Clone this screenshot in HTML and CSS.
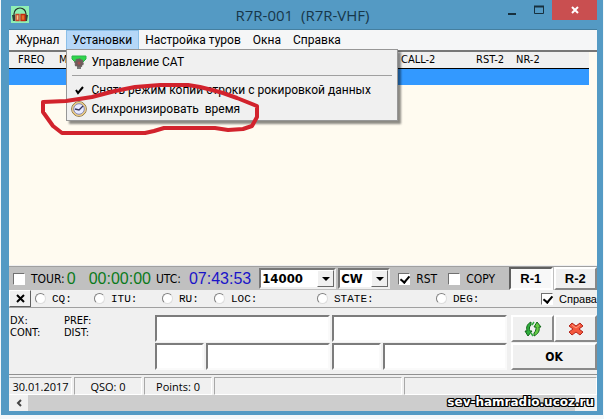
FILE: index.html
```html
<!DOCTYPE html>
<html lang="ru">
<head>
  <meta charset="UTF-8">
  <meta name="viewport" content="width=device-width, initial-scale=1.0">
  <title>R7R-001 (R7R-VHF)</title>
  <link rel="stylesheet" href="styles.css">
</head>
<body>
  <div class="window">
    <header class="titlebar">
      <svg class="app-icon" width="18" height="17" viewBox="0 0 18 17">
        <rect width="18" height="17" fill="#8ff0b4"/>
        <path d="M3 10V8a6 6 0 0 1 12 0v2" fill="none" stroke="#26332a" stroke-width="1.2"/>
        <path d="M1 9h3v6H2zM14 9h3l-1 6h-2z" fill="#33423a"/>
        <path d="M5 8.5h3v6H5z" fill="#f6c88c" stroke="#c8452a" stroke-width="1.3"/>
        <path d="M10 8.5h4v6h-4z" fill="#e0742c" stroke="#c52a12" stroke-width="1.3"/>
      </svg>
      <h1 class="title">R7R-001&nbsp; (R7R-VHF)</h1>
      <div class="win-buttons">
        <button class="win-btn" aria-label="Свернуть"><svg width="10" height="10"><path d="M1 9h8" stroke="#17303e" stroke-width="2"/></svg></button>
        <button class="win-btn" aria-label="Развернуть"><svg width="10" height="10"><path d="M.5 1.5h9v7h-9z" fill="none" stroke="#17303e"/><path d="M0 1.5h10" stroke="#17303e" stroke-width="2"/></svg></button>
        <button class="win-btn win-close" aria-label="Закрыть"><svg width="8" height="8"><path d="M1 1l6 6M7 1l-6 6" stroke="#fff" stroke-width="2"/></svg></button>
      </div>
    </header>

    <main class="client">
      <nav class="menubar">
        <button class="menu-item">Журнал</button>
        <div class="menu-holder">
          <button class="menu-item active">Установки</button>
          <!-- Раскрытое меню -->
          <div class="dropdown">
            <button class="drop-item">
              <svg width="16" height="16" viewBox="0 0 16 16">
                <path d="M1 2h14v3l-3 3H4L1 5z" fill="#2fd64c" stroke="#2bb548"/>
                <circle cx="8" cy="9" r="4" fill="#6e5c5c"/>
                <circle cx="8" cy="9" r="4" fill="none" stroke="#6e6262" stroke-width="1.5" stroke-dasharray="2 1"/>
                <circle cx="8" cy="9" r="1.5" fill="#a05050"/>
                <path d="M6 13h4v2H6z" fill="#777"/>
              </svg>
              Управление САТ
            </button>
            <hr class="drop-line">
            <button class="drop-item">
              <svg width="16" height="16" viewBox="0 0 16 16"><path d="M5 8l2 3 5-6" fill="none" stroke="#000" stroke-width="2"/></svg>
              Снять режим копии строки с рокировкой данных
            </button>
            <button class="drop-item">
              <svg width="16" height="16" viewBox="0 0 16 16">
                <circle cx="8" cy="8" r="7.3" fill="#e8eaff" stroke="#7d6434"/>
                <circle cx="8" cy="8" r="6.3" fill="none" stroke="#f0cd78" stroke-width="1.2"/>
                <circle cx="8" cy="8" r="5.3" fill="none" stroke="#6a6a9a" stroke-width=".8"/>
                <path d="M4 8l4 1 4-4" fill="none" stroke="#34345c" stroke-width="1.3"/>
              </svg>
              Синхронизировать&nbsp; время
            </button>
          </div>
        </div>
        <button class="menu-item">Настройка туров</button>
        <button class="menu-item">Окна</button>
        <button class="menu-item">Справка</button>
      </nav>

      <section class="log">
        <table class="log-table">
          <thead>
            <tr><th class="c-freq">FREQ</th><th class="c-mode">MODE</th><th class="c-call">CALL-2</th><th class="c-rst">RST-2</th><th>NR-2</th></tr>
          </thead>
          <tbody>
            <tr class="selected"><td></td><td></td><td></td><td></td><td></td></tr>
          </tbody>
        </table>
      </section>

      <section class="toolbar">
        <label class="tick tour"><input type="checkbox">TOUR:</label>
        <span class="digits green">0</span>
        <span class="digits green timer">00:00:00</span>
        <span class="utc">UTC:</span>
        <span class="digits blue">07:43:53</span>
        <div class="combo combo-freq">
          <select aria-label="Частота"><option>14000</option></select>
          <span class="arrow"></span>
        </div>
        <div class="combo combo-mode">
          <select aria-label="Режим"><option>CW</option></select>
          <span class="arrow"></span>
        </div>
        <label class="tick"><input type="checkbox" checked>RST</label>
        <label class="tick"><input type="checkbox">COPY</label>
        <div class="radios">
          <button class="r-btn pressed">R-1</button>
          <button class="r-btn">R-2</button>
        </div>
      </section>

      <section class="options">
        <button class="x-btn" aria-label="Сброс"><svg width="9" height="9"><path d="M1 1l7 7M8 1l-7 7" stroke="#000" stroke-width="2"/></svg></button>
        <label class="opt w-cq"><input type="radio" name="field">CQ:</label>
        <label class="opt w-itu"><input type="radio" name="field">ITU:</label>
        <label class="opt w-ru"><input type="radio" name="field">RU:</label>
        <label class="opt w-loc"><input type="radio" name="field">LOC:</label>
        <label class="opt w-state"><input type="radio" name="field">STATE:</label>
        <label class="opt"><input type="radio" name="field">DEG:</label>
        <label class="tick info"><input type="checkbox" checked>Справа</label>
      </section>

      <section class="entry">
        <div class="station">
          <span>DX:</span><span>PREF:</span>
          <span>CONT:</span><span>DIST:</span>
        </div>
        <div class="fields">
          <input class="wide" type="text" aria-label="Позывной 1">
          <input class="wide" type="text" aria-label="Позывной 2">
          <input type="text" aria-label="RST 1">
          <input type="text" aria-label="Номер 1">
          <input type="text" aria-label="RST 2">
          <input type="text" aria-label="Номер 2">
        </div>
        <div class="actions">
          <button class="act" aria-label="Обновить">
            <svg width="18" height="16" viewBox="0 0 18 16">
              <path d="M4 15L1 10h2C2 6 3 3 7 1v3C5 6 5 8 6 10h2z" fill="#2fae3c" stroke="#12661a"/>
              <path d="M13 1l4 5h-2c1 4-1 7-5 9v-3c2-2 2-4 2-6h-2z" fill="#66cc44" stroke="#12661a"/>
              <path d="M7 12l2 3M8 4l2-3" stroke="#2fae3c" stroke-width="1.5"/>
            </svg>
          </button>
          <button class="act" aria-label="Удалить">
            <svg width="16" height="14" viewBox="0 0 16 14">
              <path d="M4 1l4 3 4-3 3 3-4 3 4 3-3 3-4-3-4 3-3-3 4-3-4-3z" fill="#f4573c" stroke="#b3261c" stroke-linejoin="round"/>
              <path d="M4 3l4 3 4-3" fill="none" stroke="#ff9c80"/>
            </svg>
          </button>
          <button class="act ok">OK</button>
        </div>
      </section>

      <footer class="status">
        <span class="s-date">30.01.2017</span>
        <span class="s-qso">QSO: 0</span>
        <span class="s-points">Points: 0</span>
        <span class="s-mid"></span>
        <span class="s-rest"></span>
      </footer>

      <div class="scrollbar">
        <button class="scroll-left" aria-label="Влево"><svg width="6" height="8"><path d="M5 1L2 4l3 3" fill="none" stroke="#444" stroke-width="2"/></svg></button>
        <div class="thumb"></div>
      </div>
    </main>
  </div>

  <!-- Обводка нужного пункта меню -->
  <svg class="marker" width="230" height="60" viewBox="36 80 230 60">
    <path d="M43 102L66 101 92 97 115 91 135 87 160 85 188 85 200 87 212 90 223 93 237 98 257 106 257 117 252 126 243 129 228 130 215 128 164 128 154 131 145 133 62 133 53 126 43 112Z" fill="none" stroke="#d2232d" stroke-width="4" stroke-linejoin="round"/>
  </svg>
  <div class="watermark">sev-hamradio.ucoz.ru</div>
</body>
</html>
```
FILE: styles.css
```css
* {
  box-sizing: border-box;
}

body {
  margin: 0;
  padding: 0 1px 4px;
  height: 100vh;
  display: flex;
  background: #f4f8fa;
  color: #000;
  font-family: "DejaVu Sans Condensed", "DejaVu Sans", sans-serif;
  font-size: 11px;
  overflow: hidden;
}

button, input, select {
  font: inherit;
  color: inherit;
  margin: 0;
  padding: 0;
}

svg {
  display: block;
  flex: none;
}

.window {
  flex: 1;
  min-width: 0;
  display: flex;
  flex-direction: column;
  padding: 0 6px 4px 8px;
  background: #549ac4;
}

/* Заголовок окна */
.titlebar {
  display: flex;
  height: 30px;
  flex: none;
  border-bottom: 1px solid #457f9f;
}

.app-icon {
  margin: 6px 0 0 2px;
}

.title {
  flex: 1;
  margin: 0;
  padding-left: 78px;
  text-align: center;
  font: 15px/30px "Open Sans", sans-serif;
  color: #17374a;
}

.win-buttons {
  display: flex;
  height: 20px;
}

.win-btn {
  display: flex;
  align-items: center;
  justify-content: center;
  width: 27px;
  border: 0;
  background: none;
}

.win-close {
  width: 45px;
  background: #c94f50;
}

.client {
  flex: 1;
  min-height: 0;
  display: flex;
  flex-direction: column;
  background: #f0f0f0;
}

/* Меню */
.menubar {
  display: flex;
  height: 22px;
  flex: none;
  padding-left: 1px;
  background: #f5f6f7;
  border-bottom: 2px solid #777;
  font: 12px Roboto, sans-serif;
}

.menu-item {
  height: 20px;
  padding: 0 6px;
  border: 0;
  background: none;
}

.menu-holder {
  position: relative;
}

.menu-item.active {
  background: #b5d7f8;
  border: 1px solid #8bbfe8;
}

.dropdown {
  position: absolute;
  z-index: 2;
  top: 19px;
  left: 0;
  width: 332px;
  padding: 2px;
  background: #f0f0f0;
  border: 1px solid #979797;
  box-shadow: 3px 3px 2px rgba(0, 0, 0, 0.45);
}

.drop-item {
  display: flex;
  align-items: center;
  gap: 5px;
  width: 100%;
  height: 19px;
  padding: 0 2px;
  border: 0;
  background: none;
  white-space: nowrap;
}

.drop-line {
  margin: 4px 3px;
  border: 0;
  border-top: 1px solid #a0a0a0;
}

/* Журнал связей */
.log {
  flex: 1;
  min-height: 0;
  background: #fffbf0;
}

.log-table {
  width: calc(100% - 8px);
  border-collapse: collapse;
  table-layout: fixed;
}

.log-table th {
  height: 16px;
  padding: 0 0 0 9px;
  background: #f0f0f0;
  border-bottom: 1px solid #000;
  font-weight: normal;
  text-align: left;
}

.log-table td {
  height: 17px;
  padding: 0;
}

.selected {
  background: #3399ff;
}

.c-freq {
  width: 41px;
}

.c-mode {
  width: 342px;
}

.c-call {
  width: 75px;
}

.c-rst {
  width: 40px;
}

/* Панель с часами и частотой */
.toolbar {
  display: flex;
  align-items: center;
  height: 24px;
  flex: none;
  margin-top: 1px;
  padding-left: 4px;
  background: #c0c0c0;
  border-top: 1px solid #a0a0a0;
  font-size: 12px;
}

.tick {
  display: flex;
  align-items: center;
  gap: 6px;
  margin-right: 11px;
}

.tick.tour {
  margin-right: 2px;
}

input[type="checkbox"] {
  appearance: none;
  flex: none;
  width: 12px;
  height: 12px;
  border: 1px solid;
  border-color: #707070 #fff #fff #707070;
  background: #fff;
}

input[type="checkbox"]:checked::after {
  content: "";
  display: block;
  width: 4px;
  height: 7px;
  margin: 0 0 0 3px;
  border: solid #000;
  border-width: 0 2px 2px 0;
  transform: rotate(40deg);
}

.digits {
  font: 16px "Liberation Sans", sans-serif;
}

.green {
  color: #0b7a1b;
}

.blue {
  color: #1a14c8;
}

.timer {
  margin: 0 5px 0 13px;
}

.utc {
  margin-right: 8px;
}

.combo {
  position: relative;
  height: 21px;
  margin-right: 2px;
  border: 2px solid;
  border-color: #777 #f0f0f0 #f0f0f0 #777;
  background: #fff;
}

.combo-freq {
  width: 77px;
  margin-left: 8px;
}

.combo-mode {
  width: 52px;
  margin-right: 8px;
}

.combo select {
  appearance: none;
  width: 100%;
  height: 100%;
  padding-left: 1px;
  border: 0;
  background: none;
  font-weight: bold;
  font-size: 13px;
}

.arrow {
  position: absolute;
  top: 0;
  right: 0;
  width: 17px;
  height: 17px;
  border: 1px solid;
  border-color: #fff #696969 #696969 #fff;
  background: #f0f0f0;
  pointer-events: none;
}

.arrow::after {
  content: "";
  display: block;
  width: 0;
  margin: 6px 0 0 4px;
  border: 4px solid transparent;
  border-top-color: #000;
  border-bottom: 0;
}

.radios {
  display: flex;
  flex: 1;
  gap: 1px;
  height: 100%;
  margin-left: 3px;
}

.r-btn {
  flex: 1;
  border: 2px solid;
  border-color: #fff #888 #888 #fff;
  background: #f0f0f0;
  font: bold 13px "Liberation Sans", sans-serif;
}

.r-btn.pressed {
  border-color: #606060 #fff #fff #606060;
  background: #f8f8f8;
}

/* Строка переключателей */
.options {
  display: flex;
  align-items: center;
  height: 18px;
  flex: none;
  border-bottom: 1px solid #a0a0a0;
  white-space: nowrap;
  overflow: hidden;
}

.x-btn {
  display: flex;
  align-items: center;
  justify-content: center;
  width: 22px;
  height: 17px;
  margin-right: 4px;
  border: 1px solid;
  border-color: #fff #606060 #606060 #fff;
  background: #f0f0f0;
}

.opt {
  display: flex;
  align-items: center;
  gap: 6px;
  font: 11px "Liberation Mono", monospace;
}

.opt input {
  appearance: none;
  width: 11px;
  height: 11px;
  border: 1px solid;
  border-color: #808080 #ddd #ddd #808080;
  border-radius: 50%;
  background: #fff;
}

.w-cq {
  width: 59px;
}

.w-itu {
  width: 68px;
}

.w-ru {
  width: 52px;
}

.w-loc {
  width: 103px;
}

.w-state {
  width: 119px;
}

.tick.info {
  margin: 0 0 0 auto;
  font-family: "Liberation Sans", sans-serif;
}

/* Ввод связи */
.entry {
  display: flex;
  padding: 7px 0 4px 1px;
  border-bottom: 1px solid #909090;
}

.station {
  display: grid;
  grid-template-columns: 54px 91px;
  grid-auto-rows: 12px;
  line-height: 12px;
}

.fields {
  flex: 1;
  display: grid;
  grid-template-columns: 2fr 5fr 2fr 5fr;
  grid-auto-rows: 27px;
  gap: 1px 2px;
}

.fields input {
  width: 100%;
  min-width: 0;
  padding: 0 4px;
  border: 2px solid;
  border-color: #7c7c7c #fafafa #fafafa #7c7c7c;
  background: #fff;
}

.fields .wide {
  grid-column: span 2;
}

.actions {
  display: grid;
  grid-template-columns: 43px 43px;
  grid-auto-rows: 27px;
  gap: 1px 0;
  margin-left: 4px;
}

.act {
  display: flex;
  align-items: center;
  justify-content: center;
  border: 2px solid;
  border-color: #fff #8a8a8a #8a8a8a #fff;
  background: #f0f0f0;
}

.act.ok {
  grid-column: span 2;
  font: bold 12px "DejaVu Sans Condensed", sans-serif;
}

/* Строка состояния */
.status {
  display: flex;
  gap: 2px;
  height: 20px;
  flex: none;
  padding-top: 2px;
  font: 11px/17px "Open Sans", sans-serif;
  text-align: center;
}

.status span {
  border: 1px solid;
  border-color: #a8a8a8 #fff #fff #a8a8a8;
}

.status .s-date {
  width: 63px;
  border-left-color: #f0f0f0;
}

.s-qso, .s-points {
  width: 68px;
}

.s-mid {
  width: 188px;
}

.s-rest {
  flex: 1;
}

.scrollbar {
  display: flex;
  height: 16px;
  flex: none;
  padding-right: 22px;
}

.scroll-left {
  display: flex;
  align-items: center;
  justify-content: center;
  width: 19px;
  border: 0;
  background: none;
}

.thumb {
  flex: 1;
  background: #cdcdcd;
}

.marker {
  position: absolute;
  z-index: 3;
  top: 80px;
  left: 36px;
  pointer-events: none;
}

.watermark {
  position: absolute;
  right: 10px;
  bottom: 9px;
  color: #fff;
  font: bold 12px/16px "DejaVu Sans", sans-serif;
  text-shadow: 1px 0 #000, -1px 0 #000, 0 1px #000, 0 -1px #000, 1px 1px #000, -1px -1px #000, 1px -1px #000, -1px 1px #000;
}
```
